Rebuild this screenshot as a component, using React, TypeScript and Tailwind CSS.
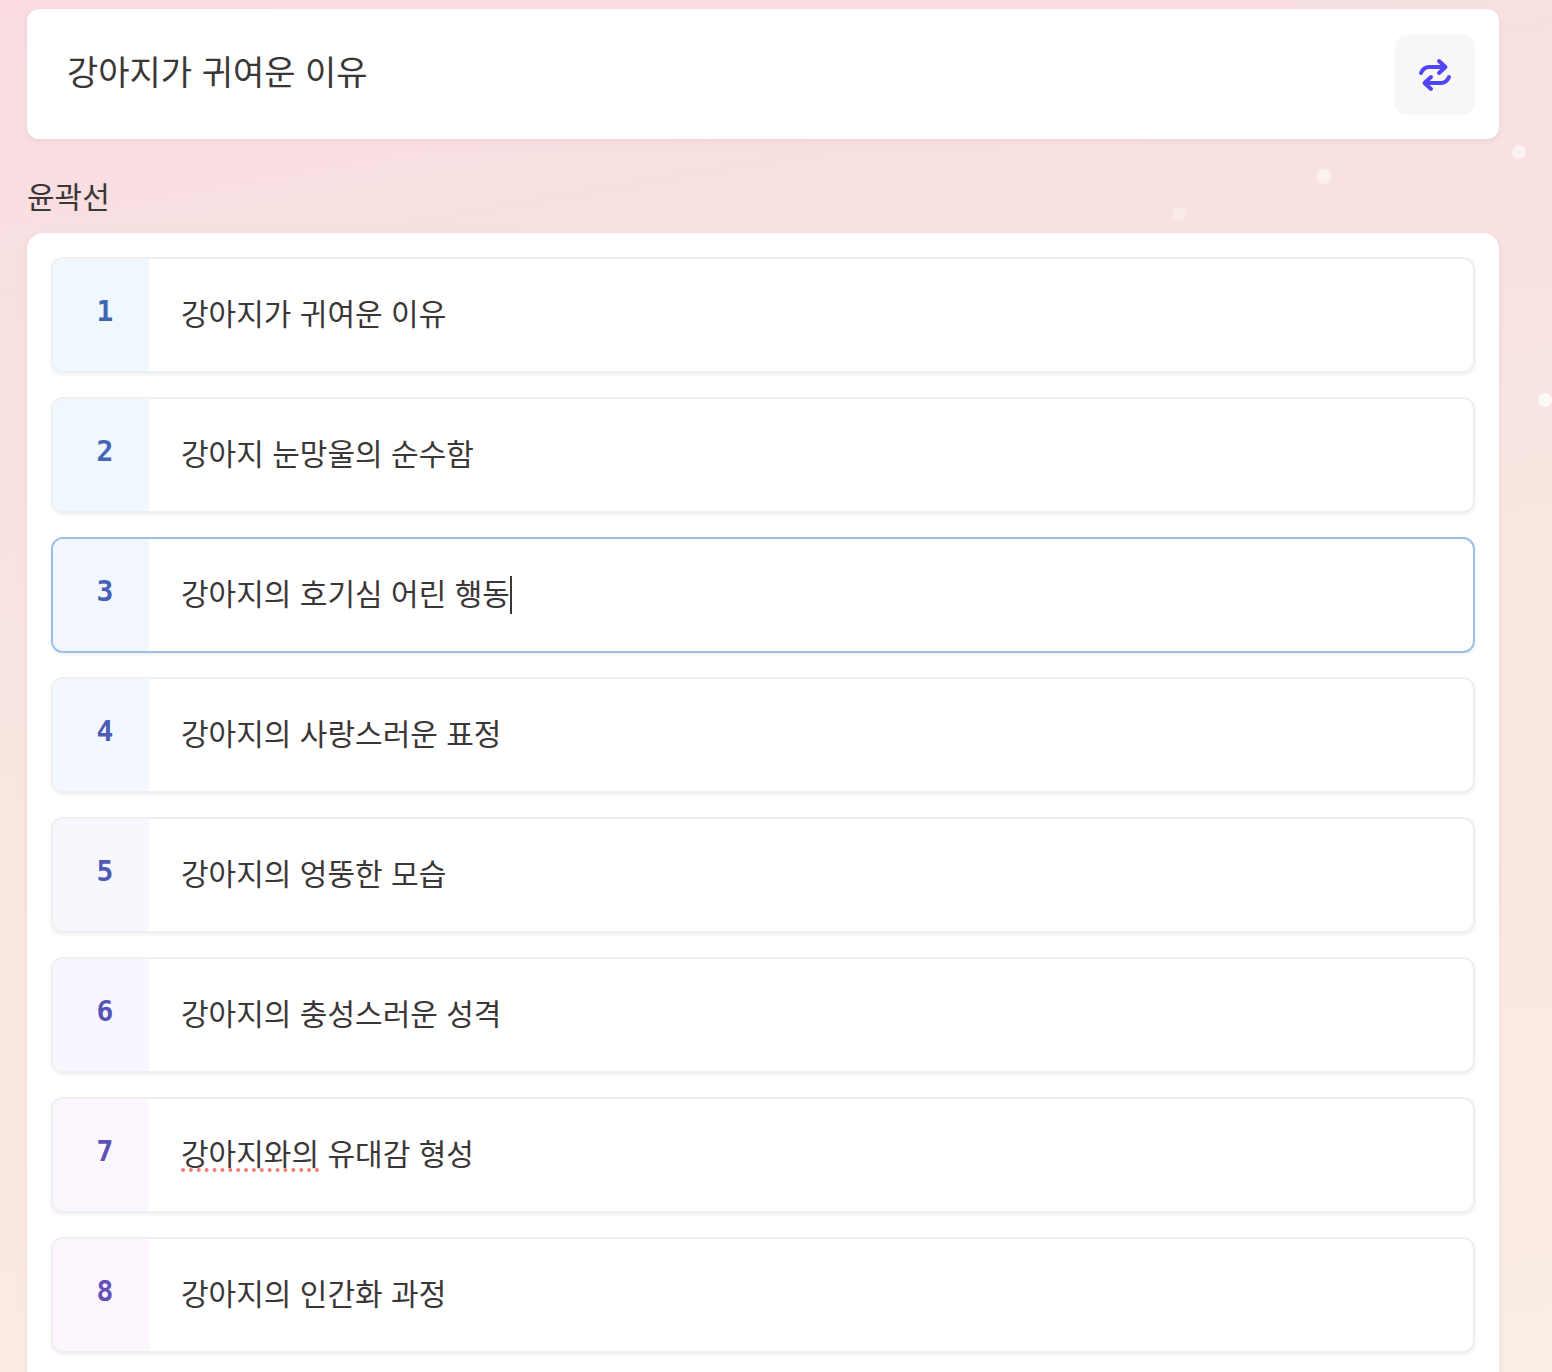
import { useState } from 'react';

interface Section {
  text: string;
  badge: string;
  active?: boolean;
  misspelled?: boolean;
}

const initialSections: Section[] = [
  { text: '강아지가 귀여운 이유', badge: 'bg-[#eff7ff] text-[#3f68b2]' },
  { text: '강아지 눈망울의 순수함', badge: 'bg-[#eff7ff] text-[#4365b3]' },
  { text: '강아지의 호기심 어린 행동', badge: 'bg-[#f2f7ff] text-[#4761b4]', active: true },
  { text: '강아지의 사랑스러운 표정', badge: 'bg-[#f3f7ff] text-[#4c5db5]' },
  { text: '강아지의 엉뚱한 모습', badge: 'bg-[#f7f8fe] text-[#5159b6]' },
  { text: '강아지의 충성스러운 성격', badge: 'bg-[#f9f6ff] text-[#5655b7]' },
  { text: '강아지와의 유대감 형성', badge: 'bg-[#fcf6ff] text-[#5d51b7]', misspelled: true },
  { text: '강아지의 인간화 과정', badge: 'bg-[#fdf6ff] text-[#644eb8]' },
];

function SwapIcon() {
  return (
    <svg
      width="40"
      height="40"
      viewBox="0 0 40 40"
      fill="none"
      stroke="currentColor"
      strokeWidth="4"
      strokeLinecap="round"
      strokeLinejoin="round"
      aria-hidden="true"
    >
      <path d="M6 18C7.500 14.500 9.500 12 14 12H30.500M24 6l6.500 6-6.500 6" />
      <path d="M34 22C32.500 25.500 30.500 28 26 28H9.500M16 22l-6.500 6 6.500 6" />
    </svg>
  );
}

function Sparkles() {
  return (
    <div className="pointer-events-none absolute inset-0 overflow-hidden" aria-hidden="true">
      <span className="absolute top-[145px] left-[1512px] size-[14px] rounded-full bg-white/55" />
      <span className="absolute top-[169px] left-[1316px] size-[15px] rounded-full bg-white/50" />
      <span className="absolute top-[207px] left-[1172px] size-[14px] rounded-full bg-white/30" />
      <span className="absolute top-[393px] left-[1538px] size-[14px] rounded-full bg-white/70" />
    </div>
  );
}

function OutlineRow({ section, index, onChange }: { section: Section; index: number; onChange: (text: string) => void }) {
  return (
    <li
      className={`flex h-[116px] overflow-hidden rounded-xl border-2 bg-white shadow-[0_2px_4px_rgba(0,0,0,0.06)] ${
        section.active ? 'border-[#9ac0ea]' : 'border-[#efefef]'
      }`}
    >
      <label
        htmlFor={`section-${index}`}
        className={`flex w-24 shrink-0 items-center justify-center pb-1.5 pl-2 font-['DejaVu_Sans_Mono',monospace] text-[28px] font-bold ${section.badge}`}
      >
        {index + 1}
      </label>
      <div className="relative flex min-w-0 flex-1 items-center px-8">
        <input
          id={`section-${index}`}
          type="text"
          value={section.text}
          spellCheck={false}
          onChange={(e) => onChange(e.target.value)}
          className={`h-full bg-transparent pb-1.5 text-[30px] outline-none ${section.active ? 'field-sizing-content caret-transparent' : 'w-full'}`}
        />
        {section.active && <span className="h-[38px] w-[2px] bg-[#3b3737]" />}
        {section.misspelled && (
          <svg className="absolute top-[69px] left-8" width="140" height="4" aria-hidden="true">
            <path d="M2 2H138" stroke="#f47c72" strokeWidth="4" strokeLinecap="round" strokeDasharray="0 7.88" />
          </svg>
        )}
      </div>
    </li>
  );
}

export default function App() {
  const [title, setTitle] = useState('강아지가 귀여운 이유');
  const [sections, setSections] = useState(initialSections);

  const updateSection = (index: number, text: string) => {
    setSections(sections.map((s, i) => (i === index ? { ...s, text } : s)));
  };

  return (
    <div className="relative h-screen overflow-hidden bg-[linear-gradient(170deg,#fadce1_0%,#f8e0e1_18%,#f8e4e2_38%,#f9e7e0_50%,#fae9e3_75%,#faede6_100%)] font-[Inter,'Noto_Sans_CJK_KR',sans-serif] text-[#3b3737]">
      <Sparkles />
      <main className="relative pt-[9px] pr-[53px] pl-[27px]">
        <div className="flex h-[130px] items-center gap-4 rounded-xl bg-white pt-0.5 pr-6 pl-10 shadow-[0_2px_6px_rgba(120,40,60,0.08)]">
          <input
            type="text"
            aria-label="강아지가 귀여운 이유"
            value={title}
            spellCheck={false}
            onChange={(e) => setTitle(e.target.value)}
            className="min-w-0 flex-1 bg-transparent pb-1.5 text-[34px] outline-none"
          />
          <button
            type="button"
            className="flex size-20 shrink-0 items-center justify-center rounded-xl bg-[#f8f7f6] text-[#5046f5]"
          >
            <SwapIcon />
          </button>
        </div>

        <h2 className="mt-9 text-[30px] leading-[44px]">윤곽선</h2>

        <ol className="mt-[14px] flex flex-col gap-6 rounded-2xl bg-white px-6 pt-6 pb-12 shadow-[0_2px_6px_rgba(120,40,60,0.08)]">
          {sections.map((section, i) => (
            <OutlineRow key={i} section={section} index={i} onChange={(text) => updateSection(i, text)} />
          ))}
        </ol>
      </main>
    </div>
  );
}
